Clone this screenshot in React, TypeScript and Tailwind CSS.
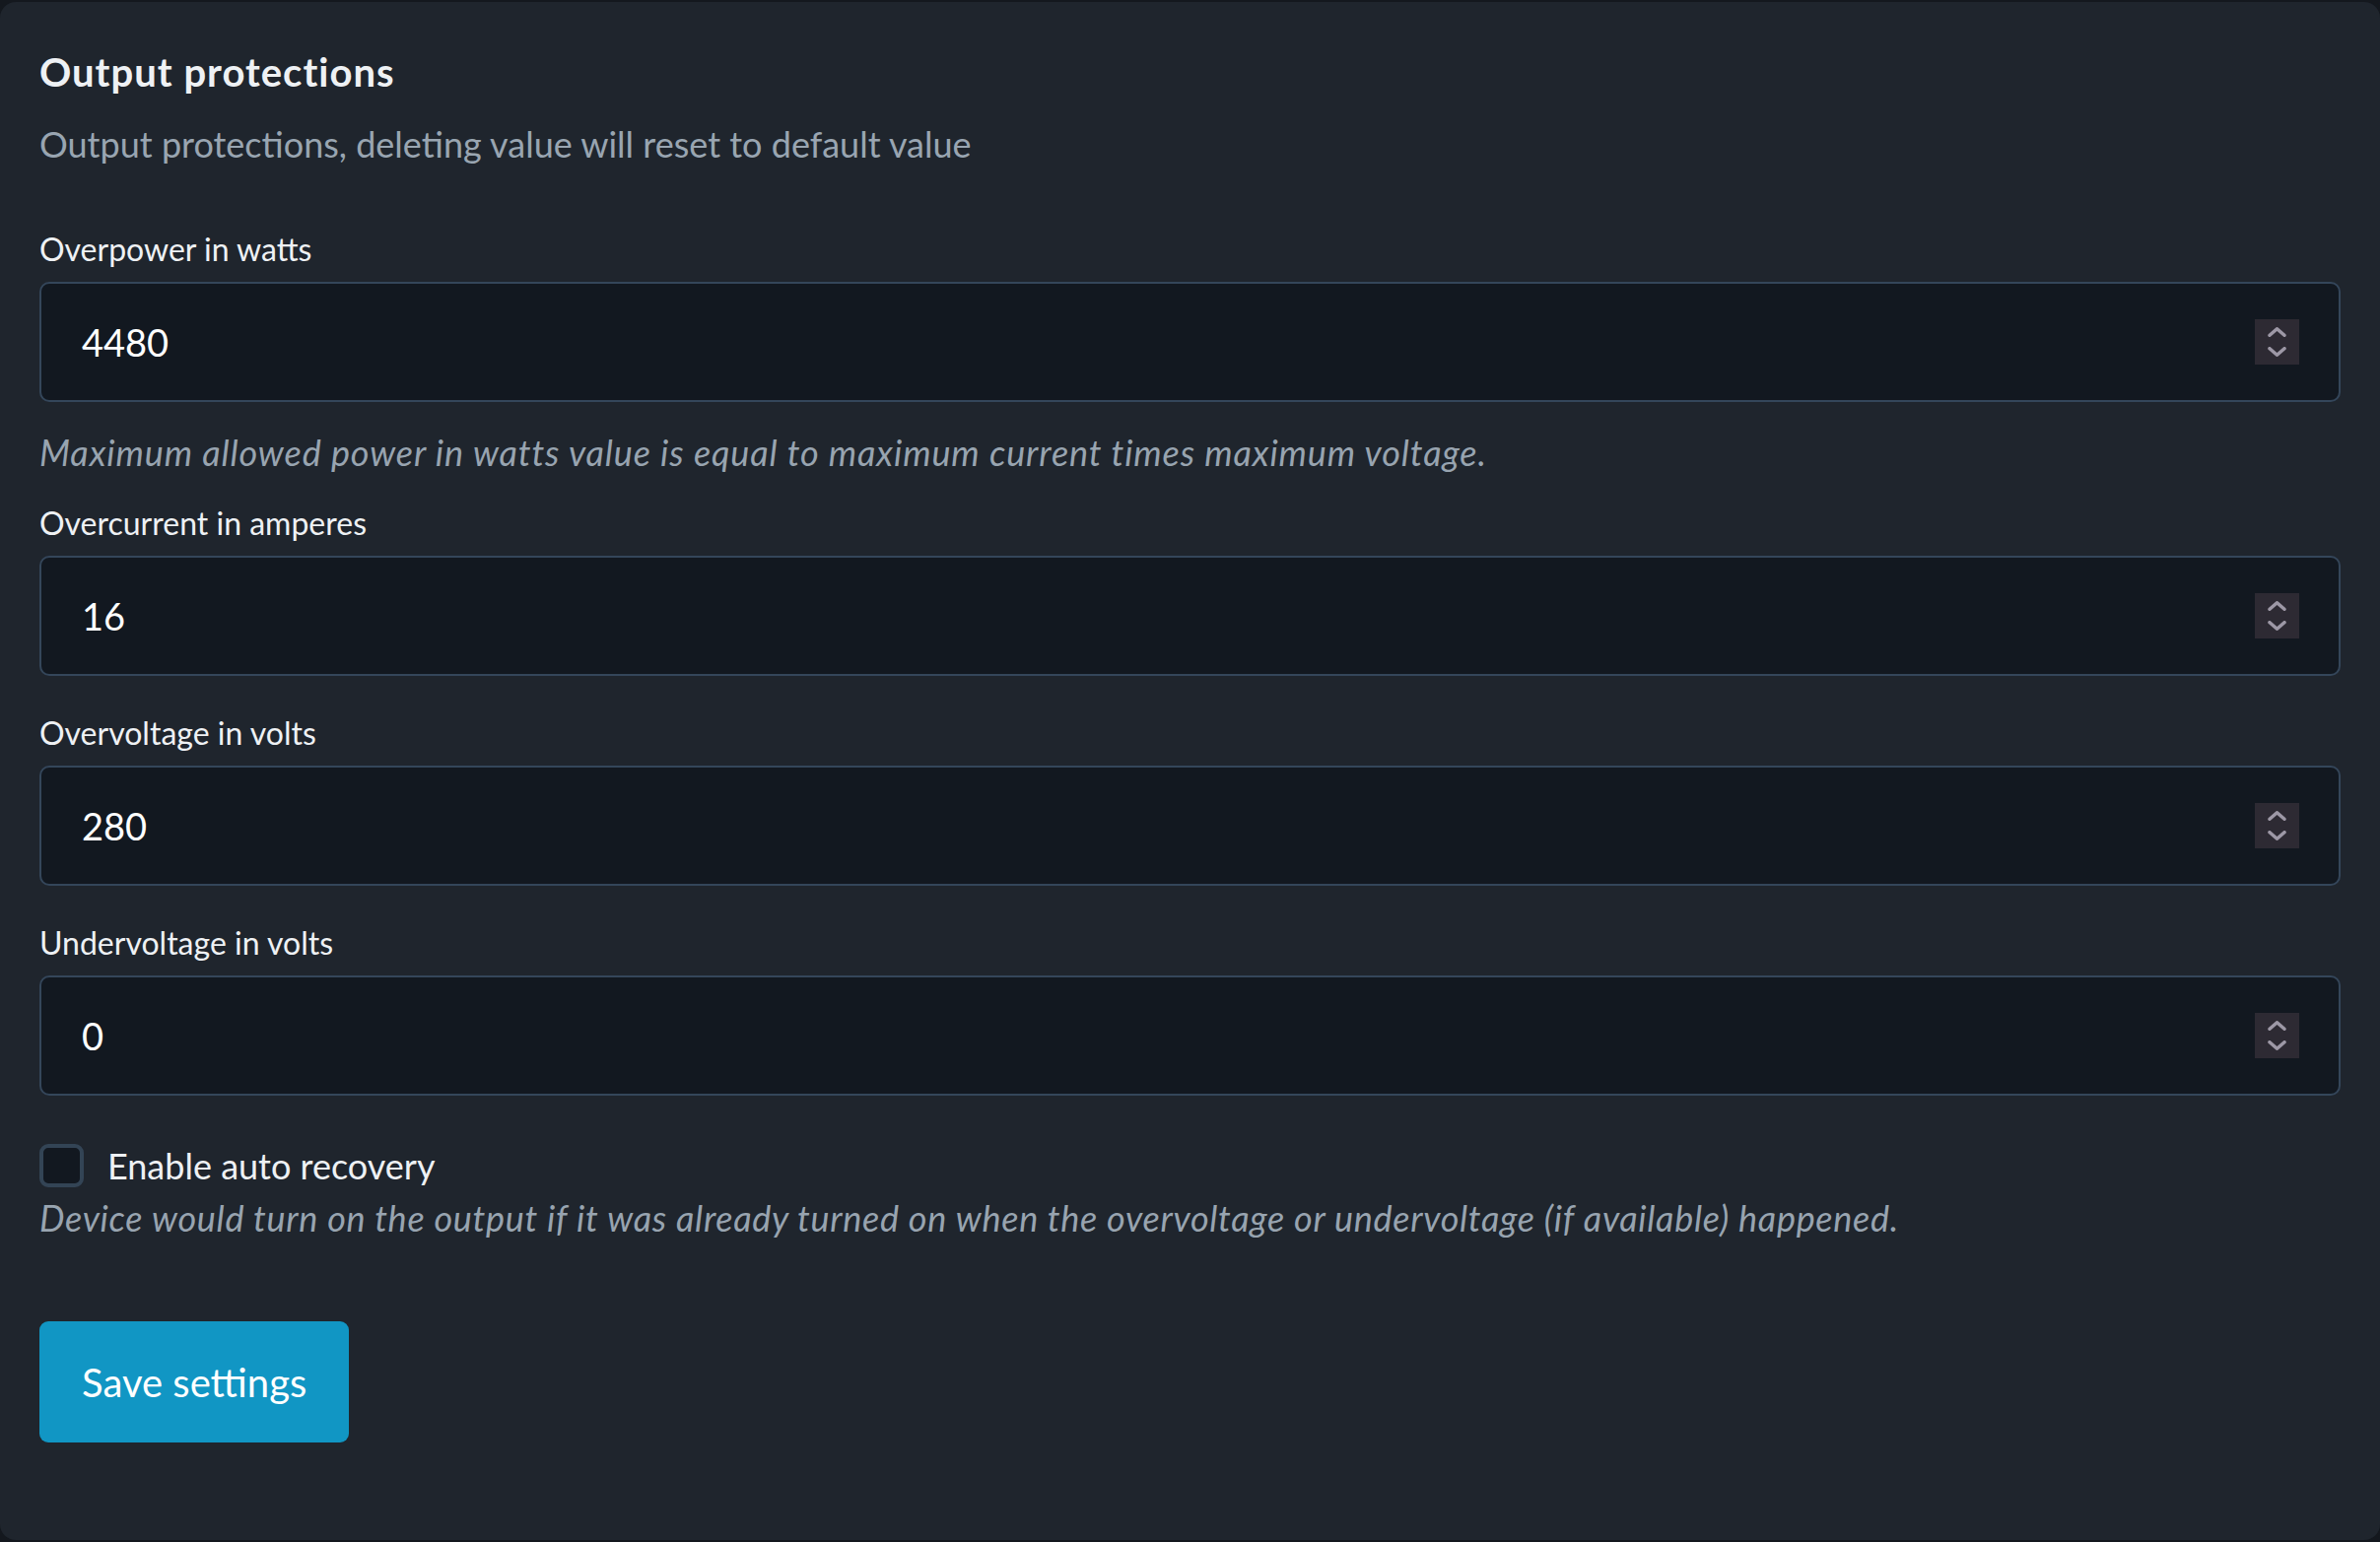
import { useState } from "react";

type Field = {
  label: string;
  value: string;
  help?: string;
};

const fields: Field[] = [
  {
    label: "Overpower in watts",
    value: "4480",
    help: "Maximum allowed power in watts value is equal to maximum current times maximum voltage.",
  },
  { label: "Overcurrent in amperes", value: "16" },
  { label: "Overvoltage in volts", value: "280" },
  { label: "Undervoltage in volts", value: "0" },
];

const Spinner = () => (
  <div className="flex h-[46px] w-[45px] shrink-0 flex-col items-center justify-center gap-[10px] bg-[#2d2a33]">
    <svg viewBox="0 0 19 10" className="h-[10px] w-[19px]" fill="none" stroke="#9d98a6" strokeWidth="3.5" strokeLinecap="round" strokeLinejoin="round">
      <path d="M2 8.3 9.5 1.8 17 8.3" />
    </svg>
    <svg viewBox="0 0 19 10" className="h-[10px] w-[19px]" fill="none" stroke="#9d98a6" strokeWidth="3.5" strokeLinecap="round" strokeLinejoin="round">
      <path d="M2 1.7 9.5 8.2 17 1.7" />
    </svg>
  </div>
);

const NumberField = ({ field }: { field: Field }) => {
  const [value, setValue] = useState(field.value);
  return (
    <div className="flex flex-col">
      <label className="text-[32px] leading-[48px] text-[#eef1f4]">{field.label}</label>
      <div className="mt-[9px] flex h-[122px] items-center rounded-[10px] border-2 border-[#34465a] bg-[#121820] pl-[41px] pr-[40px]">
        <input
          type="text"
          inputMode="numeric"
          value={value}
          onChange={(e) => setValue(e.target.value)}
          className="min-w-0 flex-1 bg-transparent text-[38px] text-white outline-none"
        />
        <Spinner />
      </div>
      {field.help && (
        <p className="mt-[24px] text-[36px] italic leading-[54px] tracking-[0.9px] text-[#98a4b0]">{field.help}</p>
      )}
    </div>
  );
};

export default function App() {
  const [recovery, setRecovery] = useState(false);

  return (
    <div className="min-h-screen bg-[#14181e] pt-[2px] font-['Lato',sans-serif]">
      <div className="flex min-h-[1561px] flex-col rounded-[16px] bg-[#1f252d] px-[40px] pb-[97px] pt-[47px]">
        <h2 className="text-[40px] font-bold leading-[48px] tracking-[1px] text-[#eef1f4]">Output protections</h2>
        <p className="mt-[22px] text-[36px] leading-[54px] text-[#99a5b1]">
          Output protections, deleting value will reset to default value
        </p>

        <div className="mt-[56px] flex flex-col gap-[21px]">
          <NumberField field={fields[0]} />
          <div className="flex flex-col gap-[34px]">
            {fields.slice(1).map((f) => (
              <NumberField key={f.label} field={f} />
            ))}
          </div>
        </div>

        <label className="mt-[49px] flex cursor-pointer items-center gap-[24px]">
          <input
            type="checkbox"
            checked={recovery}
            onChange={(e) => setRecovery(e.target.checked)}
            className="h-[44px] w-[45px] shrink-0 cursor-pointer appearance-none rounded-[9px] border-[4px] border-[#334455] bg-[#121820] checked:bg-[#1196c4]"
          />
          <span className="text-[36px] leading-[44px] text-[#eef1f4]">Enable auto recovery</span>
        </label>
        <p className="mt-[4px] text-[36px] italic leading-[54px] tracking-[0.7px] text-[#98a4b0]">
          Device would turn on the output if it was already turned on when the overvoltage or undervoltage (if available) happened.
        </p>

        <div className="mt-[78px]">
          <button className="h-[123px] rounded-[9px] bg-[#1196c4] px-[43px] text-[40px] text-white">
            Save settings
          </button>
        </div>
      </div>
    </div>
  );
}
